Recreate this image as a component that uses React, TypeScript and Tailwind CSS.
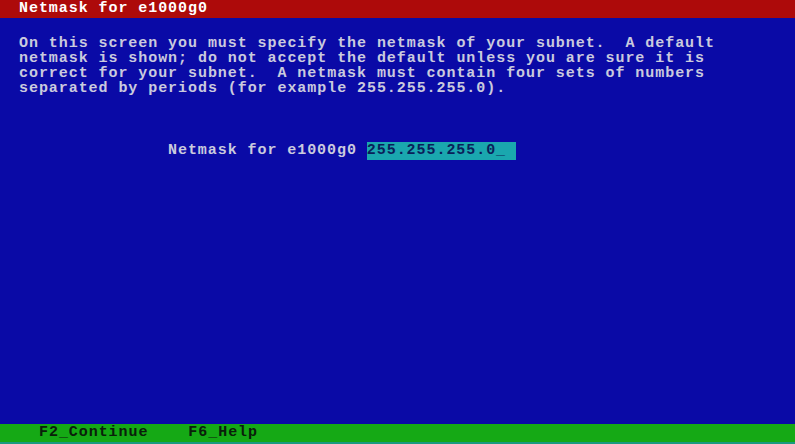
export default function App() {
  const mono = "font-['Liberation_Mono','DejaVu_Sans_Mono',monospace] font-bold text-[15px] tracking-[0.94px]";
  return (
    <div className={`w-[795px] h-[444px] flex flex-col bg-[#0a0aa6] text-[#cacade] ${mono}`}>
      <div className="h-[18px] leading-[18px] bg-[#ad0a0a] text-white pl-[19px] whitespace-pre">
        Netmask for e1000g0
      </div>
      <div className="flex-1 flex flex-col">
        <pre className="mt-[18px] ml-[19px] leading-[15px] font-[inherit]">
{`On this screen you must specify the netmask of your subnet.  A default
netmask is shown; do not accept the default unless you are sure it is
correct for your subnet.  A netmask must contain four sets of numbers
separated by periods (for example 255.255.255.0).`}
        </pre>
        <div className="mt-[46px] ml-[168px] flex h-[18px] leading-[18px] whitespace-pre">
          <span>Netmask for e1000g0 </span>
          <span className="w-[149px] bg-[#1aa7ae] text-[#0a1e5a]">255.255.255.0_</span>
        </div>
      </div>
      <div className="h-[20px] bg-[#15a915] border-b-2 border-[#1a9a80] text-[#0a200a] leading-[18px] flex whitespace-pre">
        <span className="ml-[39px]">F2_Continue</span>
        <span className="ml-[40px]">F6_Help</span>
      </div>
    </div>
  );
}
